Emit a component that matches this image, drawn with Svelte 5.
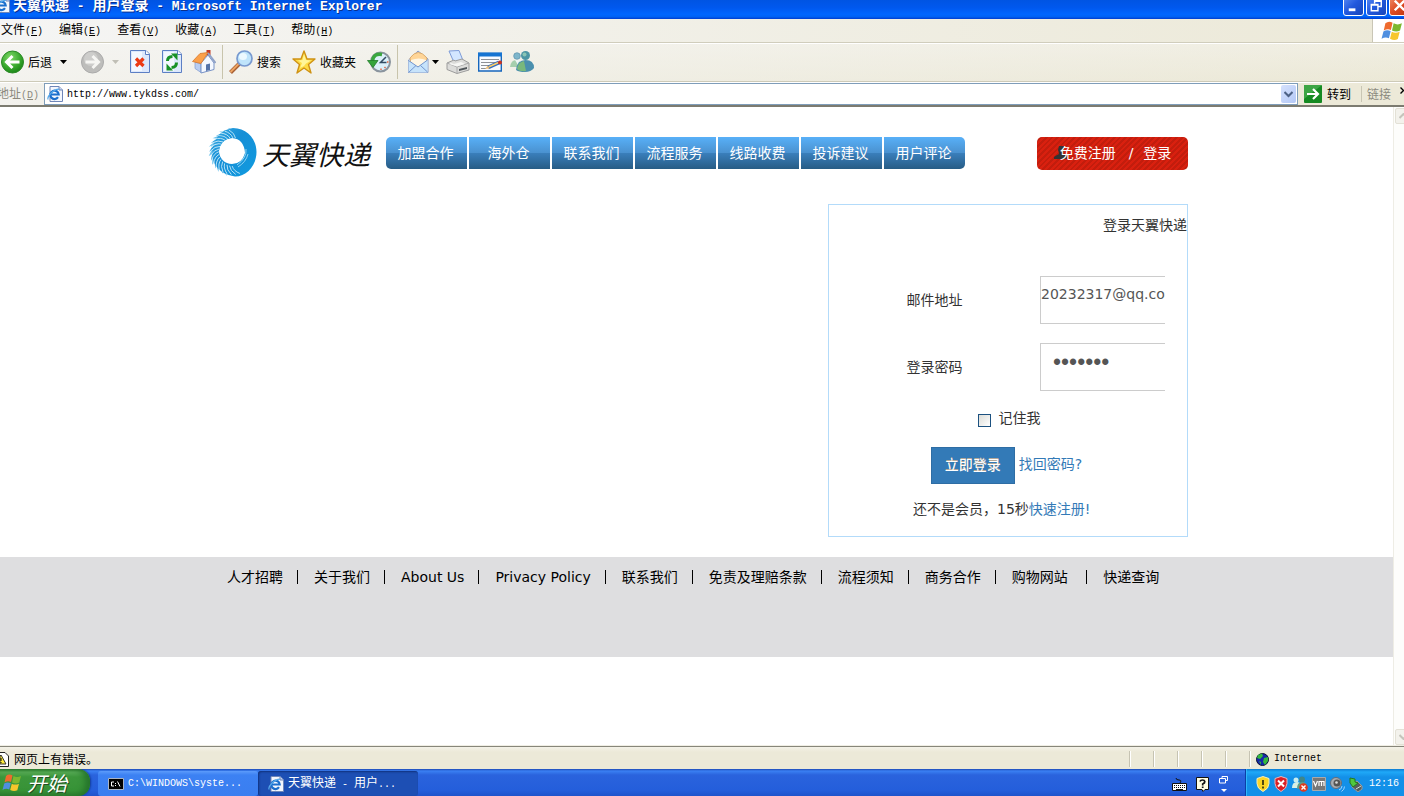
<script>
  const menus = [['文件', 'F'], ['编辑', 'E'], ['查看', 'V'], ['收藏', 'A'], ['工具', 'T'], ['帮助', 'H']];
  const nav = ['加盟合作', '海外仓', '联系我们', '流程服务', '线路收费', '投诉建议', '用户评论'];
  const footer = ['人才招聘', '关于我们', 'About Us', 'Privacy Policy', '联系我们', '免责及理赔条款', '流程须知', '商务合作', '购物网站\u00a0', '快递查询'];
  const feathers = Array.from({ length: 18 }, (_, i) => 175 + i * 11);
  let address = $state('http://www.tykdss.com/');
  let email = $state('20232317@qq.co');
  let password = $state('1234567');
  let remember = $state(false);
</script>

{#snippet ie(size)}
  <svg width={size} height={size} viewBox="0 0 16 16" aria-hidden="true">
    <path d="M3 .5h9l3.500 3.500v11.500H3z" fill="#f4f7fd" stroke="#6f86b8" />
    <path d="M12 .5V4h3.500" fill="#c8d6f0" stroke="#6f86b8" />
    <path d="M11 11.200A4.200 4.200 0 1 1 11.700 8.500H4" fill="none" stroke="#1c6fcd" stroke-width="2.200" />
    <path d="M1.200 13.500C-.5 11 6 3.500 12 3.200" fill="none" stroke="#55a8ea" stroke-width="1.200" />
  </svg>
{/snippet}

{#snippet flag(size)}
  <svg width={size} height={size} viewBox="0 0 20 20" aria-hidden="true">
    <path d="M4 3Q7 .5 10.500 2.500L9 9Q6 7.500 2.500 9.500z" fill="#ee6a2e" />
    <path d="M11.500 3Q15 5 19 3L17.300 9.500Q14 11.500 10 9.500z" fill="#7cb82f" />
    <path d="M2.200 10.500Q5.500 8.500 8.800 10.200L7.200 16.500Q4 15 .5 17z" fill="#4f8fe0" />
    <path d="M9.800 10.700Q13 12.500 17 10.700L15.300 17.300Q12 19 8.200 17z" fill="#f7c62c" />
  </svg>
{/snippet}

{#snippet caret(color)}
  <svg width="7" height="4" viewBox="0 0 7 4" aria-hidden="true"><path d="M0 0h7L3.500 4z" fill={color} /></svg>
{/snippet}

<div class="screen">
  <header class="titlebar">
    {@render ie(16)}
    <h1>天翼快递<span>{' - '}</span>用户登录<span>{' - Microsoft Internet Explorer'}</span></h1>
    <div class="winbtns">
      <button aria-label="Minimize"><svg width="19" height="19" viewBox="0 0 20 20"><path d="M5 13h7v3H5z" fill="#fff" /></svg></button>
      <button aria-label="Restore"><svg width="19" height="19" viewBox="0 0 20 20"><path d="M8 8V5h7v6h-3M8 5.500h7M4.500 9h7v6.500h-7zM4.500 9.500h7" fill="none" stroke="#fff" stroke-width="1.500" /></svg></button>
      <button class="close" aria-label="Close"><svg width="19" height="19" viewBox="0 0 20 20"><path d="M5 5l10 10M15 5L5 15" stroke="#fff" stroke-width="2.500" /></svg></button>
    </div>
  </header>

  <div class="menubar">
    <nav>
      {#each menus as [name, key]}
        <button>{name}<span class="lat">(<u>{key}</u>)</span></button>
      {/each}
    </nav>
    <div class="brand">{@render flag(22)}</div>
  </div>

  <div class="toolbar">
    <button class="labelled first">
      <svg width="24" height="24" viewBox="0 0 24 24" aria-hidden="true">
        <defs><radialGradient id="gb" cx=".4" cy=".3" r=".8"><stop offset="0" stop-color="#7fd968" /><stop offset=".6" stop-color="#35a52b" /><stop offset="1" stop-color="#137a12" /></radialGradient></defs>
        <circle cx="12.500" cy="12" r="11" fill="url(#gb)" stroke="#2b8a26" />
        <path d="M19.500 12h-12M12.500 6l-6 6 6 6" fill="none" stroke="#fff" stroke-width="3" />
      </svg>
      后退
      <i class="drop">{@render caret('#000')}</i>
    </button>
    <button class="first" aria-label="Forward">
      <svg width="24" height="24" viewBox="0 0 24 24" aria-hidden="true">
        <circle cx="12.500" cy="12" r="11" fill="#bdbdbb" stroke="#aaa" />
        <circle cx="11" cy="9" r="7" fill="#cdcdcb" />
        <path d="M5.500 12h12M12.500 6l6 6-6 6" fill="none" stroke="#f6f6f3" stroke-width="3" />
      </svg>
      <i class="drop">{@render caret('#c0bfb6')}</i>
    </button>
    <button aria-label="Stop">
      <svg width="24" height="24" viewBox="0 0 24 24" aria-hidden="true">
        <path d="M2.500.5H18L21.500 4v18.500h-19z" fill="#dce8fc" stroke="#5c7fc4" />
        <path d="M4 2h10v19H4z" fill="#f3f7ff" /><path d="M17.500.5V4.500h4" fill="#fff" stroke="#5c7fc4" />
        <path d="M8 8.500l7.500 7.500M15.500 8.500L8 16" stroke="#ec3a14" stroke-width="3.200" />
      </svg>
    </button>
    <button aria-label="Refresh">
      <svg width="24" height="24" viewBox="0 0 24 24" aria-hidden="true">
        <path d="M2.500.5H18L21.500 4v18.500h-19z" fill="#dce8fc" stroke="#5c7fc4" />
        <path d="M4 2h10v19H4z" fill="#f3f7ff" /><path d="M17.500.5V4.500h4" fill="#fff" stroke="#5c7fc4" />
        <path d="M7.500 11q0-4.500 5-4.500" fill="none" stroke="#189127" stroke-width="3" /><path d="M11 3.500h6.500v7z" fill="#189127" />
        <path d="M16.500 12.500q0 5-5 5" fill="none" stroke="#189127" stroke-width="3" /><path d="M13 20.500H6.500v-7z" fill="#189127" />
      </svg>
    </button>
    <button aria-label="Home">
      <svg width="24" height="24" viewBox="0 0 24 24" aria-hidden="true">
        <path d="M14.500 0h4v7h-4z" fill="#c43a22" />
        <path d="M3 12l6 2v8.500l-6-4z" fill="#b9cdf0" stroke="#7f9bd0" stroke-width=".7" />
        <path d="M9 13l7-8 6 8v6.500l-13 3.500z" fill="#f4f8ff" stroke="#7792c6" />
        <path d="M14 14.500l4-1v6.500l-4 1z" fill="#5573a8" />
        <path d="M.5 11.500L8 3.500 16 2.500 9 13.500z" fill="#fba04a" stroke="#d8772a" stroke-width=".8" />
        <path d="M16 3l7.500 10" stroke="#8fa2c8" stroke-width="2" />
      </svg>
    </button>
    <hr />
    <button class="labelled">
      <svg width="24" height="24" viewBox="0 0 24 24" aria-hidden="true">
        <path d="M1.500 22.500l9-9" stroke="#a65d32" stroke-width="4" /><path d="M1.500 22l8.500-8.500" stroke="#eda462" stroke-width="2" />
        <circle cx="15.500" cy="8.500" r="7.500" fill="#bfe4fb" stroke="#7899cf" stroke-width="1.700" /><ellipse cx="14" cy="6.500" rx="4" ry="3.500" fill="#edf9ff" />
      </svg>
      搜索
    </button>
    <button class="labelled">
      <svg width="24" height="24" viewBox="0 0 24 24" aria-hidden="true">
        <path d="M12 1l3 8h8l-6.500 5.500L19 23l-7-5-7 5 2.500-8.500L1 9h8z" fill="#fddb45" stroke="#cf9214" stroke-width="1.400" stroke-linejoin="round" />
        <path d="M12 4l2 6 5 .5-5 3L12 16l-4 2 2-5-4-2.500 4.500-.5z" fill="#fff59a" />
      </svg>
      收藏夹
    </button>
    <button aria-label="History">
      <svg width="24" height="24" viewBox="0 0 24 24" aria-hidden="true">
        <circle cx="13.500" cy="12" r="9.500" fill="#dcf0fa" stroke="#8a949e" stroke-width="2" />
        <path d="M14 4v1.500M14 18.500V20M20 12h1.500M18.500 18l-1-1" stroke="#e8613a" stroke-width="1.400" />
        <path d="M19 7l-5.500 5.500h6" fill="none" stroke="#334c63" stroke-width="1.500" />
        <path d="M15 4.500Q6.500 3 5.500 11" fill="none" stroke="#3aa740" stroke-width="3.500" /><path d="M.5 10.500h10.500L6 17.500z" fill="#35a53c" stroke="#217c29" stroke-width=".8" />
      </svg>
    </button>
    <hr />
    <button class="tight" aria-label="Mail">
      <svg width="24" height="24" viewBox="0 0 24 24" aria-hidden="true">
        <path d="M2.500 10L12 1l10 8v13.500H2.500z" fill="#d9e8fb" stroke="#899bc7" />
        <path d="M4 8q8-11 17 0l-1 5-7 4-8-3z" fill="#ffd597" stroke="#d6a260" stroke-width=".8" /><path d="M5 10q8-3 15 0v3l-7 4-8-3z" fill="#fff6e3" />
        <path d="M2.500 10.500L12 17l9.500-7v12.500h-19z" fill="#c6e3fb" /><path d="M2.500 10.500L12 17l9.500-7M2.500 22.500L10 15.500M21.500 22l-7-6.500" fill="none" stroke="#7195cf" />
      </svg>
      <i class="drop">{@render caret('#000')}</i>
    </button>
    <button aria-label="Print">
      <svg width="24" height="24" viewBox="0 0 24 24" aria-hidden="true">
        <path d="M3 1l10-.5 4 10-9 2z" fill="#d3e6ff" stroke="#7d9bd8" />
        <path d="M1 13l7-3 1 1 7-2 7 4v7l-12 3.500-10-4z" fill="#dcdcda" stroke="#9c9c9c" /><path d="M1 13l10 4 12-4M11 17v6" fill="none" stroke="#aaa" />
        <path d="M3 14l8 2.500 8-2.500-4-2-7 2-3-1z" fill="#f6f6f4" /><path d="M13 19l8-2v2l-8 2z" fill="#50565a" />
      </svg>
    </button>
    <button aria-label="Edit">
      <svg width="24" height="24" viewBox="0 0 24 24" aria-hidden="true">
        <path d="M.7 3.500h22.600v17.500H.7z" fill="#f9fbff" stroke="#1666bd" stroke-width="1.400" /><path d="M0 2.500h24v4H0z" fill="#1674d2" />
        <path d="M3 9.500h18M3 12.500h14M3 15.500h9M3 18.500h5" stroke="#8c9097" />
        <path d="M10 17.500l11-5" stroke="#376ec0" stroke-width="4" /><path d="M11 16.800l9-4" stroke="#ffcf66" stroke-width="1.500" /><path d="M7 19l3-3.500 1.500 3z" fill="#eebf77" /><circle cx="22" cy="12.500" r="2" fill="#c83322" />
      </svg>
    </button>
    <button aria-label="Messenger">
      <svg width="24" height="24" viewBox="0 0 24 24" aria-hidden="true">
        <circle cx="7" cy="6" r="3.300" fill="#7eb6cb" stroke="#5c91ac" stroke-width=".7" /><path d="M0 17q1-7 6-7t6 7z" fill="#a6cfad" />
        <path d="M5 10l3 5 2-5z" fill="#eef6f4" />
        <circle cx="15.500" cy="5.500" r="4.500" fill="#4b95a4" /><circle cx="14.500" cy="4.500" r="2" fill="#8ac5b4" />
        <path d="M6 20q1-10 9.500-10T24 18q-3 4-9 4t-9-2z" fill="#4a8fae" /><path d="M7 19q1-7 7-8l2 10q-6 1-9-2z" fill="#79b87c" />
      </svg>
    </button>
  </div>

  <div class="addressbar">
    <label for="addr">地址<span class="lat">(<u>D</u>)</span></label>
    <div class="combo">
      {@render ie(16)}
      <input id="addr" bind:value={address} />
      <button aria-label="Open list"><svg width="9" height="7" viewBox="0 0 9 7"><path d="M.5 1l4 4 4-4" fill="none" stroke="#4d6185" stroke-width="2" /></svg></button>
    </div>
    <button class="go">
      <svg width="18" height="18" viewBox="0 0 18 18" aria-hidden="true"><rect width="18" height="18" rx="1" fill="#158a22" /><path d="M0 0h18L0 14z" fill="#3da545" /><path d="M3 9h11M9 4l5 5-5 5" fill="none" stroke="#fff" stroke-width="2.200" /></svg>
      转到
    </button>
    <button class="links">链接</button>
    <svg class="more" width="4" height="7" viewBox="0 0 4 7" aria-hidden="true"><path d="M.5.5l3 3-3 3" fill="none" stroke="#000" stroke-width="1.400" /></svg>
  </div>

  <div class="viewport">
    <main>
      <div class="container">
        <div class="top">
          <a class="logo" href="#home">
            <svg width="50" height="50" viewBox="-25 -25 50 50" aria-hidden="true">
              <defs><linearGradient id="ring" x1="0" y1="0" x2="1" y2="1"><stop offset="0" stop-color="#35a8e2" /><stop offset=".4" stop-color="#168fd6" /><stop offset="1" stop-color="#109be0" /></linearGradient></defs>
              {#each feathers as a, i}
                <path transform="rotate({a})" d="M6-14Q4-21-6-{i % 2 ? 24 : 23}Q-1-20-3-14z" fill={i % 2 ? '#6fc3ec' : '#2c9fdc'} />
              {/each}
              <path fill-rule="evenodd" d="M0-24C14-24 23.500-13 23.500 0S14 24.500 2 24.500Q-10 23-17 14-22 6-20-6-15-22 0-24zM-1-14A13 13 0 0 0-1 12Q9 12 12 1 11-13-1-14z" fill="url(#ring)" />
              {#each feathers as a}
                <path transform="rotate({a})" d="M2-14Q1-19-5-22" fill="none" stroke="#bfe6f8" stroke-width=".9" />
              {/each}
              <path d="M13-3Q14 6 4 13M15 2Q13 10 5 15" fill="none" stroke="#9fdaf6" stroke-width=".9" />
            </svg>
            <span>天翼快递</span>
          </a>
          <nav class="sitenav">
            {#each nav as item}<a href="#{item}">{item}</a>{/each}
          </nav>
          <div class="account">
            <svg width="13" height="13" viewBox="0 0 13 13" aria-hidden="true"><path d="M5 0h5v5l-1 3 4 2v3H0v-2l3-2q2 0 2-2L4 4z" fill="#333" /></svg>
            <a href="#register">免费注册</a><span>/</span><a href="#login">登录</a>
          </div>
        </div>

        <form class="login" onsubmit={(e) => e.preventDefault()}>
          <h2>登录天翼快递</h2>
          <div class="row">
            <label for="email">邮件地址</label>
            <input id="email" type="text" bind:value={email} />
          </div>
          <div class="row">
            <label for="pw">登录密码</label>
            <input id="pw" type="password" bind:value={password} />
          </div>
          <label class="remember"><input type="checkbox" bind:checked={remember} />记住我</label>
          <div class="actions"><button>立即登录</button><a href="#forgot">找回密码?</a></div>
          <p>还不是会员，15秒<a href="#signup">快速注册!</a></p>
        </form>
      </div>

      <footer>
        <ul>
          {#each footer as item}<li><a href="#{item}">{item}</a></li>{/each}
        </ul>
      </footer>
    </main>
    <div class="scroll">
      <button aria-label="Scroll up"><svg width="9" height="6" viewBox="0 0 9 6"><path d="M.5 5l4-4 4 4" fill="none" stroke="#c5c4bb" stroke-width="2" /></svg></button>
      <button aria-label="Scroll down"><svg width="9" height="6" viewBox="0 0 9 6"><path d="M.5 1l4 4 4-4" fill="none" stroke="#c5c4bb" stroke-width="2" /></svg></button>
    </div>
  </div>

  <div class="status">
    <div class="msg">
      <svg width="9" height="15" viewBox="0 0 9 15" aria-hidden="true"><path d="M0 .5h5l3.500 3.500v10.500H0" fill="#fff" stroke="#222" /><path d="M0 4l1-1 5 9H0z" fill="#ffec3b" stroke="#333" /><path d="M1 6v3M1 10v1" stroke="#000" /></svg>
      网页上有错误。
    </div>
    <i></i><i></i><i></i><i></i><i></i>
    <div class="zone">
      <svg width="13" height="13" viewBox="0 0 13 13" aria-hidden="true"><circle cx="6.500" cy="6.500" r="6" fill="#1528a8" stroke="#0a1030" /><path d="M2 2l4-1.500L7 3 4 6 1 5zM8 5l4-1v4l-3 4-2-3z" fill="#35b93c" /><path d="M3 8l2 1v3z" fill="#35b93c" /></svg>
      <span class="lat">Internet</span>
    </div>
  </div>

  <div class="taskbar">
    <button class="start">{@render flag(20)}<span>开始</span></button>
    <button class="task">
      <svg width="16" height="12" viewBox="0 0 16 12" aria-hidden="true"><path d="M.5.500h15v11H.5z" fill="#000" stroke="#aab4c4" /><path d="M6 4H3.500v4H6M7.500 5v1M7.500 7v1M9.500 3.500L12 8.500" fill="none" stroke="#fff" /></svg>
      <span class="lat">C:\WINDOWS\syste...</span>
    </button>
    <button class="task active">{@render ie(16)}<span>天翼快递<span class="lat">{' - '}</span>用户<span class="lat">...</span></span></button>
    <div class="lang">
      <svg width="15" height="13" viewBox="0 0 15 13" aria-hidden="true"><path d="M4 0q0 2 3 2t1 3" fill="none" stroke="#111" /><path d="M.5 5.500h14v7H.5z" fill="#fff" stroke="#111" /><path d="M2 7.500h11M2 9.500h11" stroke="#111" stroke-dasharray="1 1" /><path d="M4 11.500h7" stroke="#111" /></svg>
      <svg width="14" height="15" viewBox="0 0 14 15" aria-hidden="true"><path d="M.5.500h12v12H9l-2 2-1-2H.5z" fill="#fffde2" stroke="#111" /><path d="M4 4.500Q4.500 3 6.500 3t2.300 1.500Q9 6 6.700 7v1.500M6.700 9.500V11" fill="none" stroke="#111" stroke-width="1.700" /></svg>
      <svg width="9" height="17" viewBox="0 0 9 17" aria-hidden="true"><path d="M3 2V.5h5.500v4H6.500M.5 2.500h6V7h-6z" fill="none" stroke="#fff" /><path d="M2 13h6l-3 3z" fill="#fff" /></svg>
    </div>
    <div class="tray">
      <svg width="14" height="16" viewBox="0 0 14 16" aria-hidden="true"><path d="M7 .5l6 2v5q0 5-6 8-6-3-6-8v-5z" fill="#fbd526" stroke="#f5eeb9" /><path d="M7 4v5M7 10.500v2" stroke="#34310e" stroke-width="1.700" /></svg>
      <svg width="14" height="16" viewBox="0 0 14 16" aria-hidden="true"><path d="M7 .5l6 2v5q0 5-6 8-6-3-6-8v-5z" fill="#d91f26" stroke="#f0b5b8" /><path d="M4 4.500l6 6M10 4.500l-6 6" stroke="#fff" stroke-width="2" /></svg>
      <svg width="16" height="16" viewBox="0 0 16 16" aria-hidden="true"><circle cx="4" cy="4" r="2.500" fill="#c9eef0" /><circle cx="10" cy="3.500" r="3" fill="#3f8688" /><path d="M0 12q0-6 5-6t4 6z" fill="#d9f0e4" /><path d="M5 13q0-7 5-7t4 5z" fill="#5e9f88" /><circle cx="11.500" cy="11.500" r="4.300" fill="#df3a1f" /><path d="M9.500 9.500l4 4M13.500 9.500l-4 4" stroke="#fff" stroke-width="1.400" /></svg>
      <svg width="14" height="14" viewBox="0 0 14 14" aria-hidden="true"><path d="M.5.500h13v13H.5z" fill="#777" stroke="#aaa" /><path d="M1.500 4l2 5 2-5M7 9V4.500h5V9M9.500 4.500V9" fill="none" stroke="#fff" stroke-width="1.200" /></svg>
      <svg width="15" height="15" viewBox="0 0 15 15" aria-hidden="true"><circle cx="6" cy="6" r="5.500" fill="#a9adb2" stroke="#666d78" /><circle cx="7" cy="6" r="3.500" fill="#555" /><circle cx="6.500" cy="5.500" r="1.300" fill="#ddd" /><path d="M9 13q3-1 3-4M11.500 14.500q3-2 3-5" fill="none" stroke="#9bd0ff" /></svg>
      <svg width="14" height="15" viewBox="0 0 14 15" aria-hidden="true"><path d="M3 7l5-3 5 5v3l-4 3-6-5z" fill="#555f5f" stroke="#999" /><path d="M1 1l5 1v3l3 1-5 4-3-4z" fill="#50c83e" stroke="#27791f" /><path d="M7 12l5-3" stroke="#d8e0d8" /></svg>
      <time class="lat">12:16</time>
    </div>
  </div>
</div>

<style>
  :global(body) { margin: 0; }
  .screen {
    display: flex; flex-direction: column; min-height: 100vh; overflow: hidden; background: #fff; color: #000;
    font: 12px/16px "Noto Sans CJK SC", sans-serif;
  }
  .screen :is(button, input) { font: inherit; color: inherit; margin: 0; padding: 0; border: 0; background: none; box-sizing: border-box; outline: 0; }
  .screen a { color: inherit; text-decoration: none; }
  svg { display: block; flex: none; }
  .lat { font-family: "Liberation Mono", monospace; font-size: 10px; white-space: pre; }

  .titlebar {
    display: flex; align-items: flex-end; height: 19px; box-sizing: border-box; overflow: hidden;
    background: linear-gradient(#0054e3, #0058ee 40%, #0066ff 75%, #0062f4 88%, #003dd0); color: #fff;
  }
  .titlebar > svg { margin: 0 3px 6px -6px; }
  h1 { flex: 1; margin: 0 0 5px; font-size: 14px; line-height: 14px; font-weight: 700; text-shadow: 1px 1px #0a2f8c; white-space: nowrap; }
  h1 span { font: 700 13px/14px "Liberation Mono", monospace; white-space: pre; }
  .winbtns { display: flex; gap: 2px; margin: 0 -6px 3px 0; }
  .screen .winbtns button { width: 21px; height: 21px; border: 1px solid #fff; border-radius: 3px; background: linear-gradient(135deg, #5b8df5, #2158dd 50%, #1745b8); }
  .screen .winbtns .close { background: linear-gradient(135deg, #f0906c, #dd4a21 50%, #b93210); }

  .menubar { display: flex; justify-content: space-between; height: 23px; background: linear-gradient(90deg, #f5f5f4, #ece9d8); border-bottom: 1px solid #d0cdbc; }
  .menubar nav { display: flex; align-items: center; gap: 16px; padding-left: 1px; }
  .menubar button { white-space: nowrap; }
  .brand { display: flex; align-items: center; width: 31px; overflow: hidden; background: #fff; border-left: 1px solid #c9c6b6; }
  .brand :global(svg) { margin-left: 8px; }

  .toolbar { display: flex; align-items: center; gap: 4px; height: 39px; box-sizing: border-box; padding-bottom: 2px; background: linear-gradient(90deg, rgba(245, 245, 244, .8), rgba(236, 233, 216, .3)), linear-gradient(#f2f0e6, #ebe8d6); border-top: 1px solid #fff; border-bottom: 1px solid #cdcab8; }
  .toolbar button { display: flex; align-items: center; gap: 4px; padding: 0 2px; white-space: nowrap; }
  .toolbar .first { padding: 0; }
  .toolbar .labelled { padding-right: 5px; }
  .toolbar .first.labelled { padding-right: 6px; }
  .toolbar hr { width: 1px; height: 34px; margin: 0; border: 0; background: #c8c4ac; }
  .drop { display: flex; justify-content: center; width: 14px; }
  .screen .toolbar .tight { gap: 0; padding: 0 0 0 4px; }
  .tight .drop { width: 10px; }

  .addressbar { display: flex; align-items: center; height: 25px; box-sizing: border-box; border-top: 1px solid #fff; border-bottom: 2px solid #7c7b70; background: linear-gradient(90deg, #f3f2ee, #ece9d8 20%); white-space: nowrap; }
  .addressbar label { margin: 0 5px 0 -3px; color: #8b897e; }
  .combo { display: flex; align-items: center; flex: 1; height: 22px; box-sizing: border-box; border: 1px solid #7f9db9; background: #fff; padding: 0 1px 0 2px; gap: 4px; }
  .screen .combo input { flex: 1; min-width: 0; padding-top: 2px; font-family: "Liberation Mono", monospace; font-size: 10px; line-height: 16px; }
  .screen .combo button { display: grid; place-items: center; width: 15px; height: 18px; border-radius: 2px; background: linear-gradient(135deg, #d5e1fd, #b3c8f6); }
  .go { display: flex; align-items: center; gap: 5px; }
  .screen .addressbar .go { padding: 0 10px 0 6px; }
  .screen .addressbar .links { padding: 0 9px 0 5px; color: #8b897e; border-left: 1px solid #c9c6b4; }
  .more { align-self: flex-start; margin-top: 4px; }

  .viewport { display: flex; flex: 1; background: #fff; }
  main { flex: 1; min-width: 0; font: 14px/20px "DejaVu Sans", "Noto Sans CJK SC", sans-serif; color: #333; }
  .container { max-width: 983px; margin: 0 auto; display: flex; flex-direction: column; }
  .top { display: flex; padding-top: 20px; height: 77px; align-items: flex-start; }
  .logo { display: flex; gap: 4px; padding-left: 3px; width: 178px; }
  .screen .logo { color: #111; }
  .logo span { font: italic 400 27px/28px "Noto Sans CJK SC", sans-serif; padding-top: 13px; white-space: nowrap; }
  .sitenav { display: flex; gap: 2px; margin-top: 10px; }
  .sitenav a { width: 81px; box-sizing: border-box; padding-right: 2px; line-height: 32px; text-align: center; white-space: nowrap; background: linear-gradient(#58b0f8, #4a91cf 50%, #3a7fbc 50%, #275c85); }
  .screen .sitenav a { color: #fff; }
  .sitenav a:first-child { border-radius: 5px 0 0 5px; }
  .sitenav a:last-child { border-radius: 0 5px 5px 0; }
  .account { display: flex; align-items: center; justify-content: center; width: 151px; height: 33px; box-sizing: border-box; padding-bottom: 2px; margin: 10px 0 0 auto; color: #fff; border-radius: 5px; background: repeating-linear-gradient(135deg, #d9200f 0 2px, #c21d0d 2px 4px); white-space: nowrap; }
  .account svg { margin-right: -7px; }
  .account span { padding: 0 10px 0 13px; }

  .login { align-self: flex-end; width: 360px; box-sizing: border-box; margin: 0 0 20px; padding: 10px 0 16px; border: 1px solid #b3dbfa; min-height: 333px; }
  h2 { margin: 0 0 41px; font: inherit; text-align: right; }
  .row { display: grid; grid-template-columns: 211px 125px; align-items: center; margin-bottom: 19px; }
  .row label { text-align: center; }
  .screen .login .row input { width: 125px; height: 48px; border: 1px solid #ccc; border-right: 0; padding: 0 0 12px; color: #555; }
  .screen .login .row input[type='password'] { padding: 0 0 10px 12px; font-family: "Liberation Sans", sans-serif; font-size: 23px; }
  .remember { display: flex; align-items: flex-start; justify-content: center; gap: 8px; padding-left: 2px; line-height: 16px; margin-bottom: 20px; }
  .screen .login .remember input { appearance: none; width: 13px; height: 13px; margin-top: 4px; border: 1px solid #1c5180; background: linear-gradient(135deg, #dcdcd7, #fff); }
  .actions { display: flex; justify-content: center; gap: 4px; padding-right: 3px; }
  .screen .login .actions button { width: 84px; height: 37px; padding-bottom: 2px; border: 1px solid #2e6da4; background: #337ab7; color: #fff; text-shadow: 0 -1px #b5a898; }
  .actions a { line-height: 34px; }
  .screen .login a { color: #337ab7; }
  p { margin: 15px 0 0; padding-left: 84px; }

  footer { height: 100px; background: #dedee0; color: #000; }
  ul { display: flex; list-style: none; margin: 0 auto; padding: 10px 0 0 22px; max-width: 983px; box-sizing: border-box; white-space: nowrap; }
  li { display: flex; align-items: center; }
  li + li::before { content: ''; width: 1px; height: 14px; margin: 0 16px 0 14px; background: #000; }

  .scroll { display: flex; flex-direction: column; justify-content: space-between; width: 11px; box-sizing: border-box; padding: 1px 0 1px 1px; border-left: 1px solid #eeede5; background: #fdfdfb; overflow: hidden; }
  .screen .scroll button { display: grid; place-items: center; width: 16px; height: 16px; border: 1px solid #e3e1d6; border-radius: 2px; background: #f3f2ec; }

  .status { display: flex; align-items: center; height: 23px; box-sizing: border-box; padding-top: 2px; border-top: 1px solid #87867a; background: linear-gradient(#f4f2e8, #ece9d8 5px); box-shadow: 0 -1px #f0eee4; }
  .msg { display: flex; align-items: center; gap: 5px; flex: 1; }
  .status i { width: 22px; height: 16px; border-left: 1px solid #c6c3b2; border-right: 1px solid transparent; box-shadow: inset 1px 0 #fff; }
  .zone { display: flex; align-items: center; gap: 5px; width: 148px; height: 16px; padding-left: 6px; border-left: 1px solid #c6c3b2; box-shadow: inset 1px 0 #fff; }

  .taskbar { display: flex; height: 27px; color: #fff; background: linear-gradient(#1d48b4, #3a80f3 2px, #2a63dd 6px, #245edb 80%, #1f53cb); overflow: hidden; }
  .screen .start { display: flex; align-items: center; gap: 5px; width: 90px; padding-left: 2px; border-radius: 0 12px 12px 0; background: linear-gradient(#2f7d2e, #5aae58 3px, #3c963b 8px, #379337 80%, #2f8030); box-shadow: 1px 0 2px #123c9a, inset -5px 0 6px #25752b; text-shadow: 1px 1px #234f23; }
  .start span { font-size: 20px; font-style: italic; line-height: 24px; }
  .screen .start + .task { margin-left: 8px; }
  .screen .task { display: flex; align-items: center; gap: 4px; width: 160px; height: 25px; margin-top: 2px; padding-left: 10px; border-radius: 3px; background: linear-gradient(#5c9bfb, #3c81f3 4px, #3a7ef0); white-space: nowrap; }
  .screen .task.active { background: #1d4fb4; box-shadow: inset 1px 1px 2px #10327d; }
  .lang { display: flex; align-items: center; gap: 9px; margin-left: auto; padding-right: 17px; padding-top: 4px; }
  .tray { display: flex; align-items: center; gap: 4px; padding: 3px 5px 0 10px; background: linear-gradient(#0c7bd2, #1fa9f8 3px, #1390e8 8px, #1290e9); border-left: 1px solid #0b3fa6; box-shadow: inset 1px 0 #2fb7fb; }
  .tray time { margin-left: 2px; }
</style>
